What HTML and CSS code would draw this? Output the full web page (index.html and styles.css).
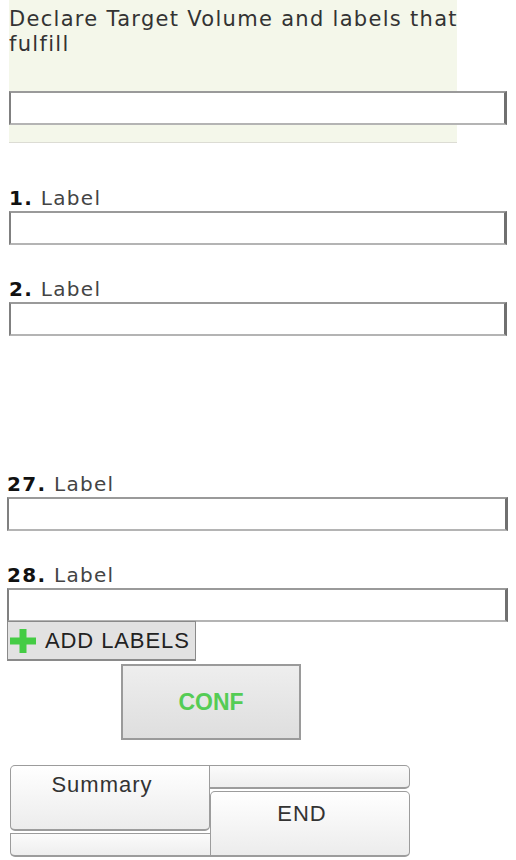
FILE: index.html
```html
<!DOCTYPE html>
<html lang="en">
<head>
    <meta charset="UTF-8">
    <meta name="viewport" content="width=device-width, initial-scale=1.0">
    <title>Target Volume</title>
    <link rel="stylesheet" href="styles.css">
</head>
<body>
    <div class="page">
        <div class="target-panel">
            <p class="target-title">Declare Target Volume and labels that<br>fulfill</p>
            <input type="text" class="text-box" id="target-volume">
        </div>

        <div class="labels">
            <div class="field">
                <label for="label-1"><b>1.</b> Label</label>
                <input type="text" class="text-box" id="label-1">
            </div>
            <div class="field">
                <label for="label-2"><b>2.</b> Label</label>
                <input type="text" class="text-box" id="label-2">
            </div>
            <div class="skipped"></div>
            <div class="field shifted">
                <label for="label-27"><b>27.</b> Label</label>
                <input type="text" class="text-box" id="label-27">
            </div>
            <div class="field shifted last">
                <label for="label-28"><b>28.</b> Label</label>
                <input type="text" class="text-box" id="label-28">
            </div>
        </div>

        <button type="button" class="btn-add">
            <svg class="plus" width="28" height="24" viewBox="0 0 28 24">
                <path d="M14 0v24M1 12h26" stroke="#44cc44" stroke-width="7"/>
            </svg>
            ADD LABELS
        </button>

        <div class="conf-row">
            <button type="button" class="btn-conf">CONF</button>
        </div>

        <div class="tabs">
            <div class="tab-col">
                <div class="tab tab-raised">Summary</div>
                <div class="tab-strip"></div>
            </div>
            <div class="tab-col">
                <div class="tab-strip"></div>
                <div class="tab tab-low">END</div>
            </div>
        </div>
    </div>
</body>
</html>
```

FILE: styles.css
```css
body {
    margin: 0;
    background-color: #fff;
    color: #333;
    font-family: 'DejaVu Sans', Verdana, sans-serif;
}

.page {
    padding-left: 9px;
}

.target-panel {
    width: 448px;
    background-color: #f4f7ea;
    padding: 7px 0 17px 0;
    border-bottom: 1px solid #dcdcd4;
}

.target-title {
    margin: 0 0 34px 0;
    font-size: 21px;
    line-height: 25px;
    letter-spacing: 1.3px;
    white-space: nowrap;
    color: #333;
}

.text-box {
    display: block;
    box-sizing: border-box;
    width: 498px;
    height: 34px;
    margin: 0;
    padding: 0 6px;
    background-color: #fff;
    border-style: solid;
    border-width: 2px 3px 2px 2px;
    border-color: #9a9a9a #707070 #b4b4b4 #808080;
    outline: none;
}

.labels {
    margin-top: 44px;
}

.field {
    margin-bottom: 33px;
}

.field label {
    display: block;
    font-size: 20px;
    line-height: 22px;
    letter-spacing: 1.3px;
    margin-bottom: 2px;
    color: #444;
}

.field b {
    color: #111;
}

.skipped {
    height: 104px;
}

.shifted {
    margin-left: -2px;
}

.shifted .text-box {
    width: 501px;
}

.field.last {
    margin-bottom: 0;
}

.btn-add {
    display: flex;
    align-items: center;
    box-sizing: border-box;
    width: 189px;
    height: 40px;
    margin: -1px 0 0 -2px;
    padding: 0 0 0 1px;
    background-color: #e2e2e2;
    border: 1px solid #8a8a8a;
    border-bottom-width: 2px;
    font-family: 'Liberation Sans', Arial, sans-serif;
    font-size: 22px;
    letter-spacing: 0.9px;
    color: #222;
}

.plus {
    margin-right: 8px;
}

.conf-row {
    padding-left: 112px;
    margin-top: 3px;
}

.btn-conf {
    box-sizing: border-box;
    width: 180px;
    height: 76px;
    background: linear-gradient(#eeeeee, #dedede);
    border: 2px solid #9a9a9a;
    font-family: 'Liberation Sans', Arial, sans-serif;
    font-weight: bold;
    font-size: 23px;
    color: #55cc55;
}

.tabs {
    display: flex;
    width: 400px;
    margin: 25px 0 0 1px;
}

.tab-col {
    display: flex;
    flex-direction: column;
    gap: 2px;
    width: 200px;
}

.tab {
    box-sizing: border-box;
    height: 66px;
    background: linear-gradient(#ffffff, #ececec);
    border: 1px solid #9c9c9c;
    border-bottom-width: 2px;
    border-radius: 5px;
    font-family: 'Liberation Sans', Arial, sans-serif;
    font-size: 22px;
    letter-spacing: 1px;
    color: #333;
    text-align: center;
}

.tab-raised {
    padding: 6px 16px 0 0;
    border-radius: 5px 0 5px 5px;
}

.tab-low {
    padding: 9px 16px 0 0;
    border-radius: 5px 5px 5px 0;
}

.tab-strip {
    box-sizing: border-box;
    height: 24px;
    background: linear-gradient(#fbfbfb, #eeeeee);
    border: 1px solid #9c9c9c;
    border-bottom-width: 2px;
}

.tab-col:first-child .tab-strip {
    border-radius: 0 0 0 5px;
    border-right: none;
}

.tab-col:last-child .tab-strip {
    border-left: none;
    border-radius: 0 5px 5px 0;
}
```
